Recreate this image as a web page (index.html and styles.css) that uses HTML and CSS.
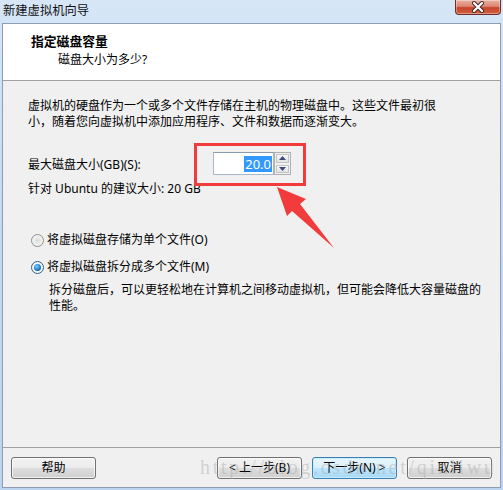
FILE: index.html
```html
<!DOCTYPE html>
<html>
<head>
<meta charset="utf-8">
<link rel="stylesheet" href="styles.css">
</head>
<body>
<div class="window">
  <div class="titlebar">
    <span class="title">新建虚拟机向导</span>
    <div class="close">
      <svg width="20" height="12" viewBox="0 0 20 12"><path d="M6 2 L14 10 M14 2 L6 10" stroke="#3a2a28" stroke-width="4" stroke-linecap="round"/><path d="M6 2 L14 10 M14 2 L6 10" stroke="#ffffff" stroke-width="2.2" stroke-linecap="round"/></svg>
    </div>
  </div>
  <div class="client">
    <div class="header">
      <div class="h-title">指定磁盘容量</div>
      <div class="h-sub">磁盘大小为多少?</div>
    </div>
    <div class="content">
      <p class="intro">虚拟机的硬盘作为一个或多个文件存储在主机的物理磁盘中。这些文件最初很<br>小，随着您向虚拟机中添加应用程序、文件和数据而逐渐变大。</p>
      <div class="size-row">
        <span class="label">最大磁盘大小(GB)(S):</span>
        <div class="spin">
          <div class="spin-input"><span class="sel">20.0</span></div>
          <div class="spin-btns">
            <div class="spin-btn"><svg width="7" height="4" viewBox="0 0 7 4"><path d="M0 4 L3.5 0 L7 4Z" fill="#3b4a7a"/></svg></div>
            <div class="spin-btn"><svg width="7" height="4" viewBox="0 0 7 4"><path d="M0 0 L3.5 4 L7 0Z" fill="#3b4a7a"/></svg></div>
          </div>
        </div>
      </div>
      <p class="hint">针对 Ubuntu 的建议大小: 20 GB</p>
      <div class="radio-row first"><span class="radio"></span><span>将虚拟磁盘存储为单个文件(O)</span></div>
      <div class="radio-row"><span class="radio checked"></span><span>将虚拟磁盘拆分成多个文件(M)</span></div>
      <p class="desc">拆分磁盘后，可以更轻松地在计算机之间移动虚拟机，但可能会降低大容量磁盘的<br>性能。</p>
    </div>
    <div class="footer">
      <button class="btn">帮助</button>
      <button class="btn back">&lt; 上一步(B)</button>
      <button class="btn default">下一步(N) &gt;</button>
      <button class="btn">取消</button>
    </div>
  </div>
  <div class="redbox"></div>
  <svg class="arrow" width="503" height="490" viewBox="0 0 503 490"><polygon points="277,187 306,199 300,204 334,248 292,211 287,216" fill="#f23c3c"/></svg>
  <div class="watermark">http://blog.csdn.net/qinliwu</div>
</div>
</body>
</html>
```
FILE: styles.css
```css
html, body {
  margin: 0;
  padding: 0;
}
body {
  width: 503px;
  height: 490px;
  overflow: hidden;
  font-family: "Noto Sans", "Noto Sans CJK SC", sans-serif;
  font-size: 12px;
  color: #000;
}
.window {
  position: relative;
  width: 503px;
  height: 490px;
  display: flex;
  flex-direction: column;
  background: linear-gradient(180deg, #d6e6f7 0%, #c6dbf2 40%, #bcd4ef 100%);
}
.titlebar {
  height: 23px;
  flex: none;
  display: flex;
  align-items: center;
}
.title {
  padding-left: 3px;
  font-size: 12.3px;
  line-height: 16px;
  color: #111;
  margin-top: -1px;
}
.close {
  position: absolute;
  top: 0;
  right: 2px;
  width: 44px;
  height: 14px;
  border: 1px solid #6e3026;
  border-top: none;
  border-radius: 0 0 4px 4px;
  background: linear-gradient(180deg, #eab0a2 0%, #dc8672 45%, #c8432c 55%, #d0603f 100%);
  box-shadow: inset 0 0 0 1px rgba(255,255,255,0.35);
  display: flex;
  align-items: center;
  justify-content: center;
}
.client {
  flex: 1;
  margin: 0 2px 2px;
  border: 1px solid #8d9db3;
  background: #f0f0f0;
  display: flex;
  flex-direction: column;
}
.header {
  height: 57px;
  background: #fff;
  border-bottom: 1px solid #a0a0a0;
  padding: 8px 0 0 28px;
  box-sizing: border-box;
  flex: none;
}
.h-title {
  font-weight: bold;
  font-size: 12.8px;
  line-height: 18px;
}
.h-sub {
  padding-left: 27px;
  line-height: 18px;
  margin-top: 1px;
}
.content {
  flex: 1;
  padding: 17px 0 0 25px;
}
.intro {
  margin: 0;
  line-height: 16px;
}
.size-row {
  margin-top: 22px;
  height: 23px;
  display: flex;
  align-items: center;
}
.label {
  width: 185px;
}
.spin {
  display: flex;
  height: 23px;
}
.spin-input {
  width: 61px;
  height: 23px;
  box-sizing: border-box;
  border: 1px solid #a9b7c9;
  border-top-color: #8a9bb0;
  background: #fff;
  display: flex;
  align-items: center;
  justify-content: flex-end;
  padding-right: 1px;
}
.sel {
  background: #3399ff;
  color: #fff;
  font-size: 13px;
  line-height: 16px;
  padding: 0 1px;
}
.spin-btns {
  width: 17px;
  display: flex;
  flex-direction: column;
  border: 1px solid #b0b0b0;
  box-sizing: border-box;
  background: #f0f0f0;
}
.spin-btn {
  flex: 1;
  margin: 1px;
  border: 1px solid #c4c4c4;
  background: linear-gradient(#f7f7f7, #e2e2e2);
  display: flex;
  align-items: center;
  justify-content: center;
}
.hint {
  margin: 6px 0 0;
  line-height: 16px;
}
.radio-row {
  display: flex;
  align-items: center;
  line-height: 16px;
  margin-top: 11px;
}
.radio-row.first {
  margin-top: 35px;
}
.radio {
  width: 13px;
  height: 13px;
  box-sizing: border-box;
  border-radius: 50%;
  border: 1px solid #8e8f8f;
  background: radial-gradient(circle at 50% 50%, #dcdcdc 0%, #ececec 45%, #f8f8f8 100%);
  margin: 0 3px 0 3px;
  position: relative;
}
.radio.checked {
  border-color: #2c628b;
  background: #f4f4f4;
}
.radio.checked::after {
  content: "";
  position: absolute;
  left: 2px;
  top: 2px;
  width: 7px;
  height: 7px;
  border-radius: 50%;
  background: radial-gradient(circle at 40% 35%, #8ad0ff 0%, #2a8ad4 45%, #0d4a80 100%);
}
.desc {
  margin: 7px 0 0 21px;
  line-height: 16px;
}
.footer {
  flex: none;
  height: 40px;
  box-sizing: border-box;
  border-top: 1px solid #a0a0a0;
  padding: 9px 8px 8px;
  display: flex;
  gap: 10px;
}
.btn {
  width: 85px;
  height: 22px;
  box-sizing: border-box;
  border: 1px solid #707070;
  border-radius: 3px;
  background: linear-gradient(180deg, #f2f2f2 0%, #ebebeb 48%, #dddddd 52%, #cfcfcf 100%);
  box-shadow: inset 0 0 0 1px rgba(255,255,255,0.7);
  font-family: "Noto Sans", "Noto Sans CJK SC", sans-serif;
  font-size: 12px;
  color: #000;
  padding: 0;
  line-height: 18px;
}
.btn.back {
  margin-left: auto;
}
.btn.default {
  border-color: #3c7fb1;
  background: linear-gradient(180deg, #eaf6fd 0%, #d9f0fc 48%, #bee6fd 52%, #a7d9f5 100%);
  box-shadow: inset 0 0 0 1px #c5ecff;
}
.redbox {
  position: absolute;
  left: 194px;
  top: 143px;
  width: 112px;
  height: 43px;
  box-sizing: border-box;
  border: 3px solid #f03c3c;
}
.arrow {
  position: absolute;
  left: 0;
  top: 0;
}
.watermark {
  position: absolute;
  left: 200px;
  top: 455px;
  font-family: "Liberation Serif", serif;
  font-size: 20px;
  letter-spacing: 2.7px;
  line-height: 24px;
  color: rgba(170, 170, 170, 0.45);
  white-space: nowrap;
}
```
